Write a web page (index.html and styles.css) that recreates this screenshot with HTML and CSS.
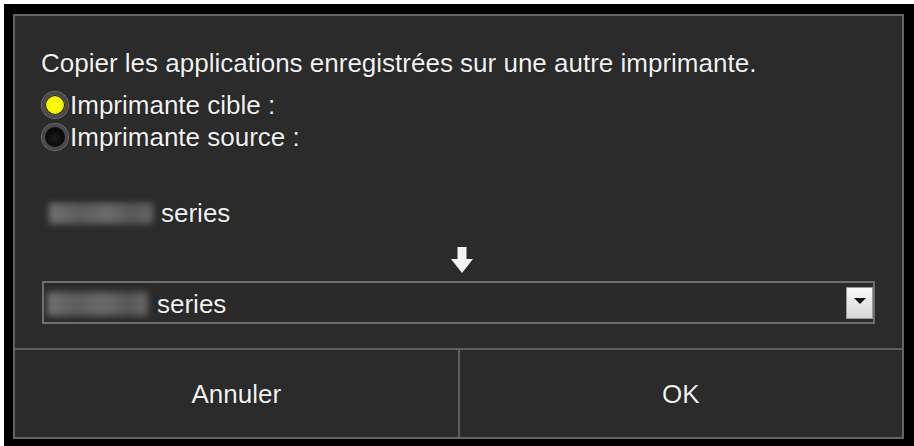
FILE: index.html
```html
<!DOCTYPE html>
<html lang="fr">
<head>
<meta charset="utf-8">
<title>Copier les applications</title>
<link rel="stylesheet" href="styles.css">
</head>
<body>
<div class="frame">
  <div class="panel">
    <div class="content">
      <p class="title">Copier les applications enregistrées sur une autre imprimante.</p>
      <div class="radios">
        <label class="radio-row"><span class="radio on"></span><span>Imprimante cible :</span></label>
        <label class="radio-row"><span class="radio"></span><span>Imprimante source :</span></label>
      </div>
      <div class="source"><span class="blur blur-a"></span><span class="series">series</span></div>
      <div class="arrow-row">
        <svg class="arrow" width="24" height="27" viewBox="0 0 24 27">
          <path d="M7.5 0 H16.5 V12 H23 L12 26 L1 12 H7.5 Z" fill="#f4f4f4"/>
        </svg>
      </div>
      <div class="select">
        <span class="blur blur-b"></span><span class="series">series</span>
        <span class="drop"><svg width="12" height="7" viewBox="0 0 12 7"><path d="M0 0 H12 L6 6 Z" fill="#111"/></svg></span>
      </div>
    </div>
    <div class="buttons">
      <div class="btn">Annuler</div>
      <div class="btn">OK</div>
    </div>
  </div>
</div>
</body>
</html>
```
FILE: styles.css
```css
html, body {
  margin: 0;
  padding: 0;
  background: #ffffff;
}
body {
  font-family: "Liberation Sans", Arial, sans-serif;
  font-size: 26px;
  color: #f2f2f2;
  text-shadow: 0 0 1px #000;
}
.frame {
  margin: 4px 0 0 4px;
  height: 442px;
  background: #000;
  padding: 10px 0 0 9px;
  box-sizing: border-box;
}
.panel {
  width: 891px;
  height: 425px;
  box-sizing: border-box;
  border: 2px solid #646464;
  background: #2b2b2b;
  display: flex;
  flex-direction: column;
}
.content {
  flex: 1;
  padding: 32px 0 0 26px;
}
.title {
  margin: 0;
  line-height: 30px;
  height: 30px;
}
.radios {
  margin-top: 11px;
}
.radio-row {
  display: flex;
  align-items: center;
  height: 32px;
  line-height: 32px;
  margin-left: 1px;
}
.radio {
  width: 20px;
  height: 20px;
  border-radius: 50%;
  border: 3px solid #4a4a4a;
  box-shadow: 0 0 0 1px #6e6e6e, inset 0 0 0 1px #111;
  background: radial-gradient(circle at 50% 55%, #1c1c1c 0%, #050505 70%);
  margin-right: 2px;
  flex: none;
}
.radio.on {
  background: radial-gradient(circle at 50% 50%, #ffff10 0%, #f4f400 60%, #a9a900 78%, #222 90%);
}
.source {
  margin-top: 45px;
  height: 30px;
  line-height: 30px;
  display: flex;
  align-items: center;
  padding-left: 8px;
}
.blur {
  display: inline-block;
  background: linear-gradient(90deg, #707070, #5c5c5c 30%, #6a6a6a 55%, #575757 80%, #656565);
  filter: blur(3px);
  border-radius: 3px;
  flex: none;
}
.blur-a {
  width: 104px;
  height: 21px;
  margin-right: 8px;
}
.arrow-row {
  margin-top: 19px;
  height: 27px;
  padding-left: 409px;
}
.arrow {
  display: block;
}
.select {
  margin: 7px 0 0 1px;
  width: 833px;
  height: 43px;
  box-sizing: border-box;
  border: 2px solid #6e6e6e;
  background: #2a2a2a;
  display: flex;
  align-items: center;
  padding-left: 3px;
  line-height: 30px;
}
.select .series {
  margin-top: 2px;
}
.blur-b {
  width: 101px;
  height: 24px;
  margin-right: 9px;
  margin-top: 3px;
}
.drop {
  margin-left: auto;
  width: 27px;
  height: 32px;
  box-sizing: border-box;
  border: 1px solid #9a9a9a;
  background: linear-gradient(180deg, #fafafa, #d6d6d6);
  display: flex;
  align-items: center;
  justify-content: center;
}
.drop svg {
  display: block;
  margin-top: -2px;
}
.buttons {
  height: 87px;
  flex: none;
  border-top: 2px solid #5e5e5e;
  display: flex;
}
.btn {
  flex: 1;
  display: flex;
  align-items: center;
  justify-content: center;
  padding-top: 2px;
}
.btn + .btn {
  border-left: 2px solid #5e5e5e;
}
```
